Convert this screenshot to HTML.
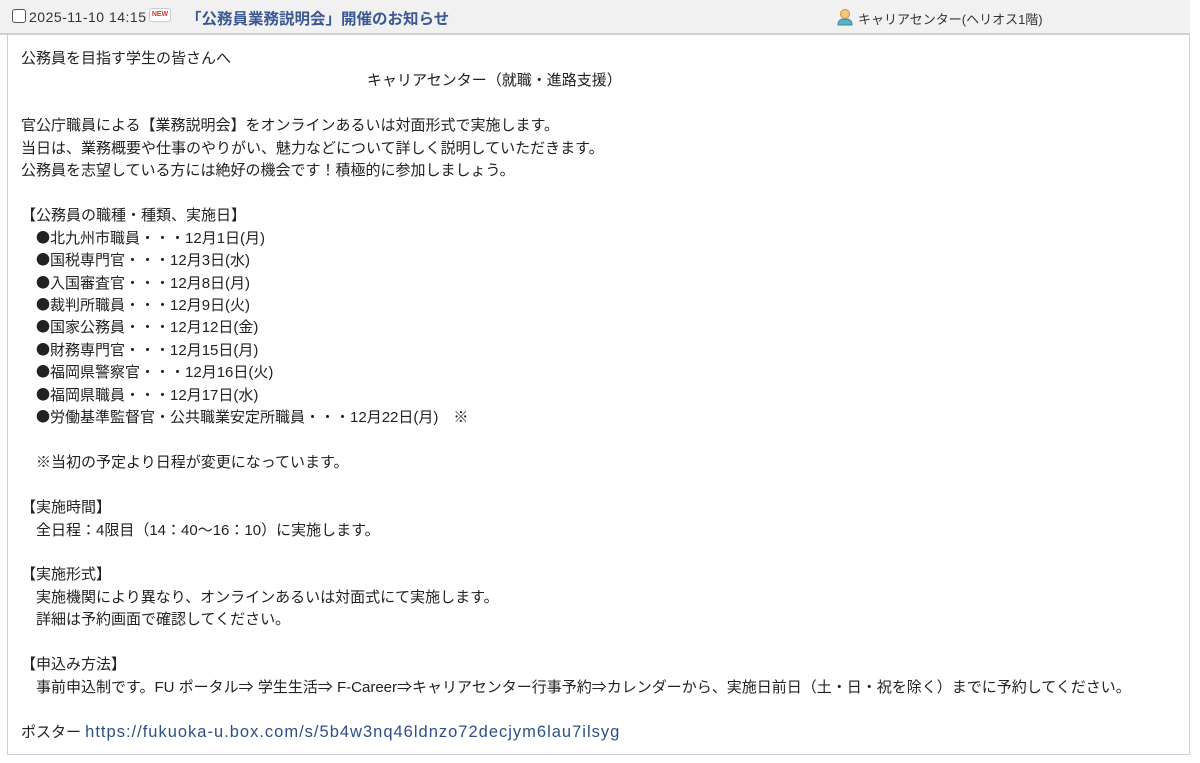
<!DOCTYPE html>
<html><head><meta charset="utf-8"><style>
body{margin:0;background:#fff;width:1200px;height:763px;overflow:hidden;font-family:"Liberation Sans","Noto Sans CJK JP",sans-serif;color:#222;}
.hd{position:absolute;left:0;top:0;width:1190px;height:33px;background:#f1f1f1;border-bottom:2px solid #d3d0cc;}
.cb{position:absolute;left:12px;top:9px;width:12px;height:12px;border:1px solid #555;border-radius:3px;background:#fff;}
.dt{position:absolute;left:29px;top:9px;font-size:14px;color:#333;letter-spacing:0.5px;}
.new{position:absolute;left:149px;top:8px;width:20px;height:12px;border:1px solid #ccc;border-radius:3px;background:#fff;font-size:7px;font-weight:bold;color:#d33;text-align:center;line-height:12px;}
.tt{position:absolute;left:186px;top:7px;font-size:15.5px;font-weight:bold;color:#3b5894;}
.ic{position:absolute;left:836px;top:8px;}
.org{position:absolute;left:858px;top:9px;font-size:13px;color:#333;}
.box{position:absolute;left:7px;top:35px;width:1181px;height:719px;border:1px solid #c5cfdd;border-top:none;}
.tx{position:absolute;left:21px;top:48px;font-size:15px;line-height:22.45px;white-space:pre;}
.b{font-family:"Noto Sans CJK JP",sans-serif;font-size:14px;line-height:0;}
a{color:#2d4f88;text-decoration:none;font-size:16.5px;letter-spacing:1px;line-height:0;}
</style></head><body>
<div class="hd">
<div class="cb"></div>
<div class="dt">2025-11-10 14:15</div>
<div class="new">NEW</div>
<div class="tt">「公務員業務説明会」開催のお知らせ</div>
<svg class="ic" width="18" height="18" viewBox="0 0 18 18"><circle cx="9" cy="6" r="4.5" fill="#f3c77a" stroke="#c9953e"/><path d="M2 17c0-5 3-6 7-6s7 1 7 6z" fill="#58b5c9" stroke="#3a8a9c"/></svg>
<div class="org">キャリアセンター(ヘリオス1階)</div>
</div>
<div class="box"></div>
<div class="tx">公務員を目指す学生の皆さんへ
<span style="margin-left:346px">キャリアセンター（就職・進路支援）</span>

官公庁職員による【業務説明会】をオンラインあるいは対面形式で実施します。
当日は、業務概要や仕事のやりがい、魅力などについて詳しく説明していただきます。
公務員を志望している方には絶好の機会です！積極的に参加しましょう。

【公務員の職種・種類、実施日】
　<span class="b">●</span>北九州市職員・・・12月1日(月)
　<span class="b">●</span>国税専門官・・・12月3日(水)
　<span class="b">●</span>入国審査官・・・12月8日(月)
　<span class="b">●</span>裁判所職員・・・12月9日(火)
　<span class="b">●</span>国家公務員・・・12月12日(金)
　<span class="b">●</span>財務専門官・・・12月15日(月)
　<span class="b">●</span>福岡県警察官・・・12月16日(火)
　<span class="b">●</span>福岡県職員・・・12月17日(水)
　<span class="b">●</span>労働基準監督官・公共職業安定所職員・・・12月22日(月)　※

　※当初の予定より日程が変更になっています。

【実施時間】
　全日程：4限目（14：40〜16：10）に実施します。

【実施形式】
　実施機関により異なり、オンラインあるいは対面式にて実施します。
　詳細は予約画面で確認してください。

【申込み方法】
　事前申込制です。FU ポータル⇒ 学生生活⇒ F-Career⇒キャリアセンター行事予約⇒カレンダーから、実施日前日（土・日・祝を除く）までに予約してください。

ポスター <a>https://fukuoka-u.box.com/s/5b4w3nq46ldnzo72decjym6lau7ilsyg</a></div>
</body></html>
